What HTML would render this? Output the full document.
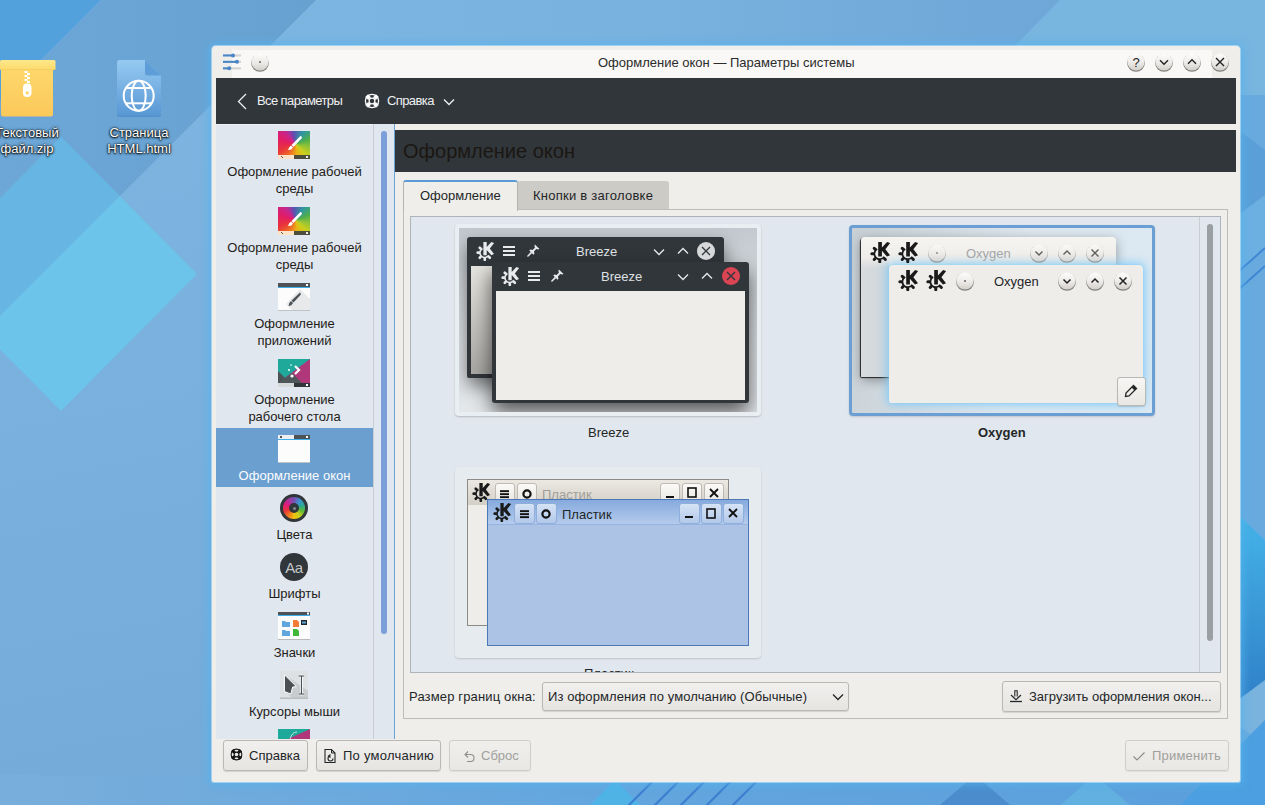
<!DOCTYPE html>
<html><head><meta charset="utf-8">
<style>
*{box-sizing:border-box;margin:0;padding:0}
html,body{width:1265px;height:805px;overflow:hidden}
body{position:relative;font-family:"Liberation Sans",sans-serif;font-size:13px;color:#232627;background:#6aa8da}
.a{position:absolute}
.t{position:absolute;white-space:nowrap;line-height:1}
#bg{position:absolute;left:0;top:0}
.win{position:absolute;left:212px;top:46px;width:1028px;height:736px;background:#efeeeb;border-radius:4px 4px 2px 2px;box-shadow:0 0 0 1px rgba(255,255,255,.4),0 0 8px 3px rgba(85,180,238,.75)}
.hdr{position:absolute;left:216px;top:78px;width:1020px;height:46px;background:#31363b}
.side{position:absolute;left:216px;top:124px;width:179px;height:615px;background:#e0e7ee}
.si{position:absolute;left:0;width:157px;text-align:center;color:#1f1c19;line-height:17px}
.btn{position:absolute;border:1px solid #b9b8b4;border-radius:3px;background:linear-gradient(#f1f0ee,#e5e4e1);box-shadow:0 1px 1px rgba(0,0,0,.12)}
.card{position:absolute;border-radius:4px;background:#eef1f4;box-shadow:0 1px 3px rgba(0,0,0,.18)}
</style></head><body>
<svg width="0" height="0" style="position:absolute">
<defs>
<symbol id="kde" viewBox="0 0 20 21">
<path d="M7.23 7.08 A5.4 5.4 0 1 0 14.35 14.71" fill="none" stroke="currentColor" stroke-width="1.8"/>
<g stroke="currentColor" stroke-width="3.0" stroke-linecap="round"><line x1="3.17" y1="11.85" x2="1.87" y2="11.85"/><line x1="5.10" y1="7.18" x2="4.18" y2="6.26"/><line x1="5.10" y1="16.52" x2="4.18" y2="17.44"/><line x1="9.77" y1="18.45" x2="9.77" y2="19.75"/><line x1="14.44" y1="16.52" x2="15.36" y2="17.44"/></g>
<polygon fill="currentColor" points="8.2,0 11.9,0 11.9,5.4 17.1,0 20.2,1.0 15.4,7.2 20,13.3 17.0,14.6 11.9,8.8 11.9,14.6 8.2,14.6"/>
</symbol>
<symbol id="ham" viewBox="0 0 12 12"><g fill="currentColor"><rect x="0" y="1" width="12" height="2"/><rect x="0" y="5" width="12" height="2"/><rect x="0" y="9" width="12" height="2"/></g></symbol>
<symbol id="pin" viewBox="0 0 14 14"><g fill="currentColor"><path d="M8.5 0.5 L13.5 5.5 L12 6 L10 5.5 L7.5 8 L8 10.5 L7 11.5 L2.5 7 L3.5 6 L6 6.5 L8.5 4 L8 2 Z"/><path d="M4.2 8.4 L5.6 9.8 L1 14 L0 13 Z"/></g></symbol>
<symbol id="chevd" viewBox="0 0 12 8"><path d="M1 1.5 L6 6.5 L11 1.5" fill="none" stroke="currentColor" stroke-width="1.3"/></symbol>
<symbol id="chevu" viewBox="0 0 12 8"><path d="M1 6.5 L6 1.5 L11 6.5" fill="none" stroke="currentColor" stroke-width="1.3"/></symbol>
<linearGradient id="oxb" x1="0" y1="0" x2="0" y2="1"><stop offset="0" stop-color="#fdfdfc"/><stop offset="0.55" stop-color="#eceae7"/><stop offset="1" stop-color="#d2cfca"/></linearGradient>
<filter id="oxs" x="-30%" y="-30%" width="160%" height="160%"><feGaussianBlur stdDeviation="0.6"/></filter>
<symbol id="oxbtn" viewBox="0 0 20 20"><circle cx="10" cy="10.9" r="8.9" fill="#5d5b58" opacity=".75" filter="url(#oxs)"/><circle cx="10" cy="10" r="8.6" fill="url(#oxb)"/></symbol>
<symbol id="lifebuoy" viewBox="0 0 16 16"><g fill="none" stroke="currentColor"><circle cx="8" cy="8" r="6.6" stroke-width="1.3"/><circle cx="8" cy="8" r="2.9" stroke-width="1.3"/></g><g stroke="currentColor" stroke-width="4"><line x1="2.6" y1="2.6" x2="5.6" y2="5.6"/><line x1="13.4" y1="2.6" x2="10.4" y2="5.6"/><line x1="2.6" y1="13.4" x2="5.6" y2="10.4"/><line x1="13.4" y1="13.4" x2="10.4" y2="10.4"/></g></symbol>
</defs></svg>
<svg id="bg" width="1265" height="805" viewBox="0 0 1265 805">
<defs>
<linearGradient id="bgg" x1="0" y1="0" x2="0.3" y2="1"><stop offset="0" stop-color="#7fb5e0"/><stop offset="0.5" stop-color="#7ab0dd"/><stop offset="1" stop-color="#72aad9"/></linearGradient>
<linearGradient id="bandg" x1="0" y1="0" x2="1" y2="0"><stop offset="0" stop-color="#6ca7d7"/><stop offset="1" stop-color="#67a1d1"/></linearGradient>
<clipPath id="dia"><polygon points="61,137 197,274 61,411 -75,274"/></clipPath>
</defs>
<rect width="1265" height="805" fill="url(#bgg)"/>
<linearGradient id="topg" x1="0" y1="0" x2="1" y2="0"><stop offset="0" stop-color="#7db5e1"/><stop offset="0.45" stop-color="#7ab2df"/><stop offset="1" stop-color="#6ea7d8"/></linearGradient>
<polygon points="316,0 1060,0 1015,46 270,46" fill="url(#topg)"/>
<polygon points="1060,0 1265,0 1265,120 1015,46" fill="#78b5df"/>
<polygon points="0,0 101,0 0,101" fill="#52a0dc"/>
<polygon points="101,0 316,0 0,316 0,101" fill="url(#bandg)"/>
<polygon points="61,137 197,274 61,411 -75,274" fill="#6cc4ea"/>
<g clip-path="url(#dia)"><polygon points="101,0 316,0 0,316 0,101" fill="#66b5e2"/></g>
<rect x="1238" y="95" width="27" height="710" fill="#68aade"/>
<polygon points="1238,130 1265,150 1265,230 1238,210" fill="#5a9fd8"/>
<polygon points="1238,215 1265,195 1265,250 1238,270" fill="#6cb0e2"/>
<g stroke="#3f86d4" stroke-width="2"><line x1="1238" y1="272" x2="1265" y2="248"/><line x1="1238" y1="290" x2="1265" y2="266"/></g>
<linearGradient id="rcy" x1="0" y1="0" x2="0" y2="1"><stop offset="0" stop-color="#44b3e8"/><stop offset="1" stop-color="#2f7ec6"/></linearGradient>
<polygon points="1238,515 1265,540 1265,690 1238,710" fill="url(#rcy)"/>
<polygon points="1238,700 1265,680 1265,745 1238,725" fill="#79b3de"/>
<rect x="1238" y="745" width="27" height="60" fill="#55a0dc"/>
<linearGradient id="botg" x1="0" y1="0" x2="1" y2="0"><stop offset="0" stop-color="#78aedb"/><stop offset="0.45" stop-color="#64a6de"/><stop offset="1" stop-color="#5a9fdc"/></linearGradient>
<rect x="0" y="775" width="1265" height="30" fill="url(#botg)"/>
<polygon points="590,805 615,780 640,805" fill="#4fb3e6"/>
<g stroke="#3c7fcf" stroke-width="2.2"><line x1="628" y1="806" x2="655" y2="779"/><line x1="654" y1="806" x2="681" y2="779"/><line x1="680" y1="806" x2="707" y2="779"/><line x1="706" y1="806" x2="733" y2="779"/><line x1="732" y1="806" x2="759" y2="779"/></g>
<polygon points="940,805 975,775 1010,805" fill="#4a8ccc"/>
<polygon points="1060,805 1095,775 1130,805" fill="#62b0e0"/>
<polygon points="1180,805 1265,720 1265,805" fill="#4c9fe0"/>
</svg>

<!-- desktop icons -->
<svg class="a" style="left:0;top:60px" width="56" height="57" viewBox="0 0 56 57">
<defs><linearGradient id="zipb" x1="0" y1="0" x2="0" y2="1"><stop offset="0" stop-color="#fdd76b"/><stop offset="1" stop-color="#fcc85a"/></linearGradient>
<linearGradient id="zipl" x1="0" y1="0" x2="0" y2="1"><stop offset="0" stop-color="#fde88a"/><stop offset="1" stop-color="#fdda6c"/></linearGradient></defs>
<path d="M1 10 H53 V54 Q53 56.5 50.5 56.5 H3.5 Q1 56.5 1 54 Z" fill="url(#zipb)"/>
<rect x="0" y="0" width="55.5" height="10" rx="1.5" fill="url(#zipl)"/>
<rect x="0" y="9" width="55.5" height="1" fill="#f0c455" opacity=".6"/>
<g fill="#fff"><rect x="24.5" y="11" width="3" height="2"/><rect x="27" y="13" width="3" height="2"/><rect x="24.5" y="15" width="3" height="2"/><rect x="27" y="17" width="3" height="2"/><rect x="24.5" y="19" width="3" height="2"/><rect x="27" y="21" width="3" height="2"/></g>
<rect x="23" y="23.5" width="8.5" height="13.5" rx="4" fill="#fff"/><circle cx="27.2" cy="32.8" r="1.6" fill="#fdd060"/>
</svg>
<svg class="a" style="left:116px;top:59px" width="48" height="60" viewBox="0 0 48 60">
<defs><linearGradient id="htmg" x1="0" y1="0" x2="0" y2="1"><stop offset="0" stop-color="#96caf2"/><stop offset="1" stop-color="#5897d4"/></linearGradient></defs>
<path d="M3.5 1 H29 L45 16.5 V54.5 Q45 57.3 42.2 57.3 H3.8 Q1 57.3 1 54.5 V3.5 Q1 1 3.5 1Z" fill="url(#htmg)"/>
<path d="M29 1 L45 16.5 H31.5 Q29 16.5 29 14 Z" fill="#5d9ed8"/>
<path d="M1 56 Q1 57.3 3.8 57.3 H42.2 Q45 57.3 45 56" fill="none" stroke="#3f79b3" stroke-width="1" opacity=".5"/>
<g fill="none" stroke="#fff" stroke-width="2"><circle cx="22.7" cy="36.8" r="15"/><ellipse cx="22.7" cy="36.8" rx="7" ry="15"/><line x1="9.5" y1="29" x2="36" y2="29"/><line x1="9.5" y1="44.3" x2="36" y2="44.3"/></g>
</svg>
<div class="t" style="left:-33px;top:126px;width:120px;text-align:center;color:#fff;text-shadow:0 0 1px #000,0 0 3px #000,0 1px 2px #000">Текстовый</div>
<div class="t" style="left:-33px;top:142px;width:120px;text-align:center;color:#fff;text-shadow:0 0 1px #000,0 0 3px #000,0 1px 2px #000">файл.zip</div>
<div class="t" style="left:79px;top:126px;width:120px;text-align:center;color:#fff;text-shadow:0 0 1px #000,0 0 3px #000,0 1px 2px #000">Страница</div>
<div class="t" style="left:79px;top:142px;width:120px;text-align:center;color:#fff;text-shadow:0 0 1px #000,0 0 3px #000,0 1px 2px #000">HTML.html</div>

<!-- window -->
<div class="win"></div>
<div class="a" style="left:232px;top:50px;width:980px;height:28px;background:#f9f8f6"></div>
<div class="t" style="left:598px;top:56px;color:#2b2b2b">Оформление окон — Параметры системы</div>
<svg class="a" style="left:222px;top:53px" width="20" height="18" viewBox="0 0 20 18">
<g fill="#d2d3d3"><rect x="11" y="1.4" width="8" height="2.1"/><rect x="15" y="7.8" width="4" height="2.1"/><rect x="7" y="14.3" width="12" height="2.1"/></g>
<g fill="#4a86c6"><rect x="1" y="1.4" width="10" height="2.1"/><rect x="1" y="7.8" width="14" height="2.1"/><rect x="1" y="14.3" width="6" height="2.1"/>
<circle cx="11" cy="2.45" r="2"/><circle cx="15" cy="8.85" r="2"/><circle cx="7.2" cy="15.35" r="2"/></g></svg>
<svg class="a" style="left:250px;top:52px" width="20" height="20"><use href="#oxbtn"/><circle cx="10" cy="10" r="0.9" fill="#555"/></svg>
<svg class="a" style="left:1126px;top:52px" width="20" height="20"><use href="#oxbtn"/><text x="10" y="14.6" font-size="13" font-family="Liberation Sans" text-anchor="middle" fill="#222">?</text></svg>
<svg class="a" style="left:1154px;top:52px" width="20" height="20"><use href="#oxbtn"/><path d="M6 8.3 L10 12.3 L14 8.3" fill="none" stroke="#222" stroke-width="1.35"/></svg>
<svg class="a" style="left:1182px;top:52px" width="20" height="20"><use href="#oxbtn"/><path d="M6 11.7 L10 7.7 L14 11.7" fill="none" stroke="#222" stroke-width="1.35"/></svg>
<svg class="a" style="left:1210px;top:52px" width="20" height="20"><use href="#oxbtn"/><path d="M6 6 L14 14 M14 6 L6 14" fill="none" stroke="#222" stroke-width="1.35"/></svg>
<div class="hdr"></div>
<svg class="a" style="left:236px;top:93px" width="12" height="17"><path d="M10 1 L2.5 8.5 L10 16" fill="none" stroke="#eff0f1" stroke-width="1.3"/></svg>
<svg class="a" style="left:364px;top:93px;color:#fcfcfc" width="16" height="16"><use href="#lifebuoy"/></svg>
<svg class="a" style="left:443px;top:98px;color:#eff0f1" width="12" height="8"><use href="#chevd"/></svg>
<div class="t" style="left:257px;top:94px;color:#eff0f1;letter-spacing:-0.6px">Все параметры</div>
<div class="t" style="left:387px;top:94px;color:#eff0f1;letter-spacing:-0.6px">Справка</div>

<div class="side"></div>
<div class="a" style="left:216px;top:124px;width:157px;height:1px;background:#eef2f5"></div>
<div class="a" style="left:216px;top:428px;width:157px;height:59px;background:#6a9fd0"></div>
<!-- sidebar icons -->
<div class="a" style="left:278px;top:131px;width:32px;height:24px;background:conic-gradient(from -10deg at 55% 55%,#5d4fb2,#2f98a0 12%,#4fae4a 22%,#8cc23a 30%,#c9cf1d 40%,#e9b514 50%,#ef6f24 62%,#e8353a 72%,#e41c62 82%,#c6268e 92%,#5d4fb2)"></div>
<svg class="a" style="left:278px;top:131px" width="32" height="28" viewBox="0 0 32 28"><path d="M22.5 5 Q24.5 5.5 23.5 7.5 L15.5 16 L13.5 14 Z" fill="#fff"/><path d="M13 14.5 L15 16.5 Q13.5 19.5 10 19 Q11 15.5 13 14.5Z" fill="#fff"/><rect x="0" y="24" width="16" height="4" fill="#fde3c8"/><rect x="16" y="24" width="16" height="4" fill="#4d4d3d"/><rect x="28" y="25" width="2" height="2" fill="#eee"/><path d="M3 25 L5 27" stroke="#555" stroke-width="1"/></svg>
<div class="a" style="left:278px;top:207px;width:32px;height:24px;background:conic-gradient(from -10deg at 55% 55%,#5d4fb2,#2f98a0 12%,#4fae4a 22%,#8cc23a 30%,#c9cf1d 40%,#e9b514 50%,#ef6f24 62%,#e8353a 72%,#e41c62 82%,#c6268e 92%,#5d4fb2)"></div>
<svg class="a" style="left:278px;top:207px" width="32" height="28" viewBox="0 0 32 28"><path d="M22.5 5 Q24.5 5.5 23.5 7.5 L15.5 16 L13.5 14 Z" fill="#fff"/><path d="M13 14.5 L15 16.5 Q13.5 19.5 10 19 Q11 15.5 13 14.5Z" fill="#fff"/><rect x="0" y="24" width="16" height="4" fill="#fde3c8"/><rect x="16" y="24" width="16" height="4" fill="#4d4d3d"/><rect x="28" y="25" width="2" height="2" fill="#eee"/><path d="M3 25 L5 27" stroke="#555" stroke-width="1"/></svg>
<svg class="a" style="left:278px;top:283px" width="32" height="28" viewBox="0 0 32 28">
<rect x="0" y="0" width="32" height="27" fill="#fcfcfc"/><rect x="0" y="27" width="32" height="1" fill="#c0c3c5"/>
<polygon points="22,6 32,16 32,27 14,27 8,21" fill="#e8e9ea"/>
<rect x="0" y="0" width="32" height="4" fill="#4d5257"/><rect x="0" y="4" width="32" height="1" fill="#3daee9"/><rect x="28" y="1" width="2" height="2" fill="#fff"/>
<path d="M22 9.5 Q23.5 10.5 22.5 12 L15.5 19.5 L13.5 17.5 Z" fill="#4d5257"/><path d="M13 18 L15 20 Q13.5 23 10.5 23 Q11 19.5 13 18Z" fill="#4d5257"/></svg>
<svg class="a" style="left:278px;top:359px" width="32" height="28" viewBox="0 0 32 28">
<rect x="0" y="0" width="32" height="24" fill="#2a8bc4"/>
<polygon points="0,0 32,0 0,24" fill="#1ea99a"/>
<polygon points="32,0 32,24 0,24" fill="#b0387a"/>
<polygon points="0,12 12,24 0,24" fill="#4a5356"/><polygon points="0,24 12,24 24,24 14,14" fill="#4f575a"/>
<rect x="0" y="24" width="16" height="4" fill="#d6d9da"/><rect x="16" y="24" width="16" height="4" fill="#31363b"/><rect x="28" y="25" width="2" height="2" fill="#fff"/>
<path d="M17 7 L21 11 L17 15" fill="none" stroke="#fff" stroke-width="2.2"/><circle cx="14" cy="17" r="1.6" fill="#fff"/><circle cx="11" cy="11" r="1" fill="#fff"/><circle cx="13" cy="6" r=".8" fill="#fff"/></svg>
<svg class="a" style="left:278px;top:435px" width="32" height="28" viewBox="0 0 32 28">
<rect x="0" y="0" width="32" height="28" fill="#fcfcfc"/><rect x="0" y="27" width="32" height="1" fill="#c0c3c5"/>
<rect x="0" y="0" width="16" height="4" fill="#eceeef"/><rect x="16" y="0" width="16" height="4" fill="#4d5257"/><rect x="0" y="4" width="32" height="1" fill="#3daee9"/>
<rect x="2" y="1" width="2" height="2" fill="#4d5257"/><rect x="28" y="1" width="2" height="2" fill="#fff"/></svg>
<div class="a" style="left:280px;top:494px;width:28px;height:28px;border-radius:50%;background:#31363b"></div>
<div class="a" style="left:283px;top:497px;width:22px;height:22px;border-radius:50%;background:conic-gradient(#7a4fb0,#3f8fd0 10%,#2aa89a 20%,#5cb83a 30%,#c5d11c 40%,#f2c10f 50%,#f07a22 60%,#e8353a 70%,#e2187e 82%,#a33aa0 92%,#7a4fb0)"></div>
<div class="a" style="left:289px;top:503px;width:10px;height:10px;border-radius:50%;background:#31363b"></div>
<div class="a" style="left:292.5px;top:506.5px;width:3px;height:3px;border-radius:50%;background:#808b8c"></div>
<svg class="a" style="left:280px;top:553px" width="28" height="28" viewBox="0 0 28 28"><circle cx="14" cy="14" r="14" fill="#31363b"/><text x="14" y="19.5" font-size="15" font-family="Liberation Sans" text-anchor="middle" fill="#c4c7c9" letter-spacing="-0.5">Aa</text></svg>
<svg class="a" style="left:278px;top:612px" width="32" height="28" viewBox="0 0 32 28">
<rect x="0" y="0" width="32" height="28" fill="#fcfcfc"/><rect x="0" y="27" width="32" height="1" fill="#b8bbbe"/>
<rect x="0" y="0" width="32" height="3" fill="#4d5257"/><rect x="0" y="3" width="32" height="1" fill="#3daee9"/><rect x="29" y="0.5" width="2" height="2" fill="#fff"/>
<path d="M4 9 h3 l1 1 h4 v5 h-8z" fill="#5ea6dd"/><path d="M4 18 h3 l1 1 h4 v5 h-8z" fill="#5ea6dd"/>
<path d="M15 8 h4 l2 2 v5 h-6z" fill="#f47b35"/><path d="M15 17 h4 l2 2 v5 h-6z" fill="#3fb83a"/>
<rect x="23" y="8" width="6" height="5" fill="#232627"/><rect x="24" y="9.5" width="4" height="2" fill="#5ea6dd"/></svg>
<svg class="a" style="left:280px;top:671px" width="28" height="28" viewBox="0 0 28 28">
<rect x="0" y="0" width="28" height="27.5" rx="1.5" fill="#dee1e3"/><polygon points="5,4 28,20 28,27 12,27 5,20" fill="#c9ccce"/><rect x="0" y="26.5" width="28" height="1.5" fill="#babdbf"/>
<path d="M4.4 3.7 L16.4 15.6 L12.6 16.1 L10.8 23 L4.4 20.5 Z" fill="#4b4f52" stroke="#fff" stroke-width="1" stroke-linejoin="round"/>
<path d="M18.6 5 h5.6 M18.6 23 h5.6 M21.4 5 v18" stroke="#fff" stroke-width="2.6" fill="none"/><path d="M18.6 5 h5.6 M18.6 23 h5.6 M21.4 5 v18" stroke="#3a3d40" stroke-width="1" fill="none"/></svg>
<svg class="a" style="left:278px;top:729px" width="32" height="10" viewBox="0 0 32 10"><rect width="32" height="10" fill="#1ea99a"/><polygon points="32,0 32,10 10,10" fill="#b0387a"/><path d="M12 10 Q14 3 19 3" stroke="#fff" stroke-width="1" fill="none" opacity=".7"/></svg>
<!-- sidebar labels -->
<div class="si" style="left:216px;top:163px">Оформление рабочей<br>среды</div>
<div class="si" style="left:216px;top:239px">Оформление рабочей<br>среды</div>
<div class="si" style="left:216px;top:315px">Оформление<br>приложений</div>
<div class="si" style="left:216px;top:391px">Оформление<br>рабочего стола</div>
<div class="si" style="left:216px;top:467px;color:#fcfcfc">Оформление окон</div>
<div class="si" style="left:216px;top:526px">Цвета</div>
<div class="si" style="left:216px;top:585px">Шрифты</div>
<div class="si" style="left:216px;top:644px">Значки</div>
<div class="si" style="left:216px;top:703px">Курсоры мыши</div>
<div class="a" style="left:373px;top:124px;width:1px;height:615px;background:#c8ced4"></div>
<div class="a" style="left:381px;top:131px;width:6px;height:503px;background:#7b9fd8;border-radius:3px"></div>
<div class="a" style="left:394px;top:124px;width:1px;height:615px;background:#6aa2d8"></div>

<div class="a" style="left:395px;top:124px;width:841px;height:615px;background:#efeeea"></div>
<div class="a" style="left:395px;top:130px;width:841px;height:42px;background:#31363b"></div>
<div class="t" style="left:403px;top:141px;font-size:20px;color:#1b1712">Оформление окон</div>

<!-- tabs -->
<div class="a" style="left:517px;top:181px;width:152px;height:29px;background:#cdcbc6;border-radius:3px 3px 0 0"></div>
<div class="a" style="left:403px;top:180px;width:115px;height:31px;background:#efeeea;border:1px solid #b5b4b0;border-bottom:none;border-top:2px solid #5b9bd5;border-radius:3px 3px 0 0"></div>
<div class="t" style="left:420px;top:189px">Оформление</div>
<div class="t" style="left:533px;top:189px;letter-spacing:.25px">Кнопки в заголовке</div>
<div class="a" style="left:403px;top:210px;width:825px;height:509px;border:1px solid #bdbcb8;border-top:none"></div>
<div class="a" style="left:517px;top:209px;width:711px;height:1px;background:#bdbcb8"></div>

<!-- list -->
<div class="a" style="left:410px;top:216px;width:811px;height:457px;background:#e0e7ee;border:1px solid #aeb4ba"></div>
<div class="a" style="left:1199px;top:217px;width:1px;height:455px;background:#c8ced4"></div>
<div class="a" style="left:1207px;top:224px;width:6px;height:417px;background:#9a9fa3;border-radius:3px"></div>

<div class="a" style="left:411px;top:217px;width:809px;height:455px;overflow:hidden">
<div class="a" style="left:-411px;top:-217px;width:1265px;height:805px">
<!-- Breeze card -->
<div class="a" style="left:455px;top:224px;width:306px;height:192px;border-radius:4px;background:#e9eef2;box-shadow:0 1px 2px rgba(0,0,0,.2)"></div>
<div class="a" style="left:459px;top:228px;width:298px;height:184px;background:linear-gradient(#c3c9ce,#dfe3e6 60%,#e4e7ea);overflow:hidden">
 <div class="a" style="left:8px;top:9px;width:257px;height:141px;background:#31363b;border-radius:3px 3px 2px 2px;box-shadow:0 8px 18px rgba(0,0,0,.5)"></div>
 <div class="a" style="left:12px;top:38px;width:22px;height:108px;background:linear-gradient(160deg,#e4e2dd 5%,#c2c0bc 55%,#a4a3a0)"></div>
 <div class="a" style="left:33px;top:34px;width:257px;height:141px;background:#31363b;border-radius:3px 3px 3px 3px;box-shadow:0 10px 20px rgba(0,0,0,.62)"></div>
 <div class="a" style="left:37px;top:63px;width:249px;height:109px;background:#efede9"></div>
</div>
<svg class="a" style="left:476px;top:242px;color:#e8eaeb" width="18" height="19"><use href="#kde"/></svg>
<svg class="a" style="left:503px;top:245px;color:#e8eaeb" width="12" height="12"><use href="#ham"/></svg>
<svg class="a" style="left:527px;top:244px;color:#e8eaeb" width="13" height="13"><use href="#pin"/></svg>
<div class="t" style="left:576px;top:245px;color:#dfe1e3">Breeze</div>
<svg class="a" style="left:653px;top:248px;color:#e8eaeb" width="12" height="8"><use href="#chevd"/></svg>
<svg class="a" style="left:677px;top:247px;color:#e8eaeb" width="12" height="8"><use href="#chevu"/></svg>
<svg class="a" style="left:697px;top:242px" width="18" height="18"><circle cx="9" cy="9" r="9" fill="#d6d8da"/><path d="M5 5 L13 13 M13 5 L5 13" stroke="#31363b" stroke-width="1.3"/></svg>
<svg class="a" style="left:501px;top:267px;color:#e8eaeb" width="18" height="19"><use href="#kde"/></svg>
<svg class="a" style="left:528px;top:270px;color:#e8eaeb" width="12" height="12"><use href="#ham"/></svg>
<svg class="a" style="left:551px;top:269px;color:#e8eaeb" width="13" height="13"><use href="#pin"/></svg>
<div class="t" style="left:601px;top:270px;color:#dfe1e3">Breeze</div>
<svg class="a" style="left:677px;top:273px;color:#e8eaeb" width="12" height="8"><use href="#chevd"/></svg>
<svg class="a" style="left:701px;top:272px;color:#e8eaeb" width="12" height="8"><use href="#chevu"/></svg>
<svg class="a" style="left:722px;top:267px" width="18" height="18"><circle cx="9" cy="9" r="9" fill="#da4453"/><path d="M5 5 L13 13 M13 5 L5 13" stroke="#31363b" stroke-width="1.3"/></svg>
<div class="t" style="left:588px;top:426px">Breeze</div>

<!-- Oxygen card -->
<div class="a" style="left:849px;top:225px;width:306px;height:191px;border-radius:4px;border:3px solid #6b9fd3;background:linear-gradient(100deg,#c8d0d6,#dfe8ef 55%,#dbe9f3);box-shadow:0 1px 2px rgba(0,0,0,.15);overflow:hidden">
 <div class="a" style="left:9px;top:9px;width:255px;height:140px;background:linear-gradient(#f5f4f1,#eeece8 25px,#e8e7e4);border-radius:4px 4px 2px 2px;box-shadow:-1px 1px 1px #222,0 3px 12px rgba(0,0,0,.35)"></div>
 <div class="a" style="left:9px;top:30px;width:28px;height:119px;background:linear-gradient(90deg,#d9dcde,#cdd6dc);-webkit-mask-image:linear-gradient(transparent,#000 10px)"></div>
 <div class="a" style="left:37px;top:37px;width:254px;height:138px;background:#efedea;border-radius:4px 4px 2px 2px;box-shadow:0 0 2px #86d0f8,0 0 10px 2px rgba(120,200,248,.85)"></div>
</div>
<svg class="a" style="left:870px;top:242px;color:#1a1a1a" width="20" height="21"><use href="#kde"/></svg>
<svg class="a" style="left:898px;top:242px;color:#1a1a1a" width="20" height="21"><use href="#kde"/></svg>
<svg class="a" style="left:927px;top:243px;opacity:.7" width="20" height="20"><use href="#oxbtn"/><circle cx="10" cy="10" r=".9" fill="#555"/></svg>
<div class="t" style="left:966px;top:247px;color:#a4a6a8">Oxygen</div>
<svg class="a" style="left:1029px;top:243px;opacity:.7" width="20" height="20"><use href="#oxbtn"/><path d="M6.5 8.5 L10 12 L13.5 8.5" fill="none" stroke="#222" stroke-width="1.4"/></svg>
<svg class="a" style="left:1057px;top:243px;opacity:.7" width="20" height="20"><use href="#oxbtn"/><path d="M6.5 11.5 L10 8 L13.5 11.5" fill="none" stroke="#222" stroke-width="1.4"/></svg>
<svg class="a" style="left:1085px;top:243px;opacity:.7" width="20" height="20"><use href="#oxbtn"/><path d="M6.5 6.5 L13.5 13.5 M13.5 6.5 L6.5 13.5" fill="none" stroke="#222" stroke-width="1.4"/></svg>
<svg class="a" style="left:898px;top:270px;color:#1a1a1a" width="20" height="21"><use href="#kde"/></svg>
<svg class="a" style="left:926px;top:270px;color:#1a1a1a" width="20" height="21"><use href="#kde"/></svg>
<svg class="a" style="left:955px;top:271px" width="20" height="20"><use href="#oxbtn"/><circle cx="10" cy="10" r=".9" fill="#555"/></svg>
<div class="t" style="left:994px;top:275px;color:#232627">Oxygen</div>
<svg class="a" style="left:1057px;top:271px" width="20" height="20"><use href="#oxbtn"/><path d="M6.5 8.5 L10 12 L13.5 8.5" fill="none" stroke="#222" stroke-width="1.5"/></svg>
<svg class="a" style="left:1085px;top:271px" width="20" height="20"><use href="#oxbtn"/><path d="M6.5 11.5 L10 8 L13.5 11.5" fill="none" stroke="#222" stroke-width="1.5"/></svg>
<svg class="a" style="left:1113px;top:271px" width="20" height="20"><use href="#oxbtn"/><path d="M6.5 6.5 L13.5 13.5 M13.5 6.5 L6.5 13.5" fill="none" stroke="#222" stroke-width="1.5"/></svg>
<div class="btn" style="left:1117px;top:377px;width:29px;height:29px;background:linear-gradient(#f7f6f4,#e9e7e4)"></div>
<svg class="a" style="left:1124px;top:384px" width="14" height="14" viewBox="0 0 14 14"><path d="M9.5 1.5 L12.5 4.5 L5 12 L1.5 12.5 L2 9 Z" fill="none" stroke="#232627" stroke-width="1.3"/><path d="M8 3 L11 6" stroke="#232627" stroke-width="1.3"/><path d="M9.5 1.5 L12.5 4.5 L11 6 L8 3Z" fill="#232627"/></svg>
<div class="t" style="left:978px;top:426px;font-weight:bold">Oxygen</div>

<!-- Plastik card -->
<div class="a" style="left:455px;top:467px;width:306px;height:191px;border-radius:4px;background:#e6ebef;box-shadow:0 1px 2px rgba(0,0,0,.15)"></div>
<div class="a" style="left:467px;top:479px;width:262px;height:147px;background:#efede9;border:1px solid #8c8b86"></div>
<div class="a" style="left:468px;top:480px;width:260px;height:25px;background:linear-gradient(#ece9e3,#d3cfc6)"></div>
<svg class="a" style="left:472px;top:483px;color:#1a1a1a" width="18" height="19"><use href="#kde"/></svg>
<div class="a" style="left:495px;top:483px;width:20px;height:20px;border:1px solid #bdbab3;border-radius:3px;background:linear-gradient(#fbfaf8,#e9e6e0)"></div>
<div class="a" style="left:517px;top:483px;width:20px;height:20px;border:1px solid #bdbab3;border-radius:3px;background:linear-gradient(#fbfaf8,#e9e6e0)"></div>
<svg class="a" style="left:499px;top:488px" width="12" height="12"><rect x="1" y="2.2" width="9" height="1.9" fill="#111"/><rect x="1" y="5.2" width="9" height="1.9" fill="#111"/><rect x="1" y="8.2" width="9" height="1.9" fill="#111"/></svg>
<svg class="a" style="left:521px;top:488px" width="12" height="12"><circle cx="6" cy="6" r="3.6" fill="none" stroke="#111" stroke-width="2.2"/></svg>
<div class="t" style="left:542px;top:488px;color:#a09e9a">Пластик</div>
<div class="a" style="left:660px;top:483px;width:20px;height:22px;border:1px solid #bdbab3;border-radius:3px;background:linear-gradient(#fbfaf8,#e9e6e0)"></div>
<div class="a" style="left:682px;top:483px;width:20px;height:22px;border:1px solid #bdbab3;border-radius:3px;background:linear-gradient(#fbfaf8,#e9e6e0)"></div>
<div class="a" style="left:704px;top:483px;width:20px;height:22px;border:1px solid #bdbab3;border-radius:3px;background:linear-gradient(#fbfaf8,#e9e6e0)"></div>
<svg class="a" style="left:660px;top:483px" width="64" height="22"><rect x="6" y="13" width="8" height="2" fill="#111"/><rect x="28" y="5" width="8" height="9" fill="none" stroke="#111" stroke-width="1.6"/><path d="M50 6 L58 14 M58 6 L50 14" stroke="#111" stroke-width="1.8"/></svg>

<div class="a" style="left:487px;top:499px;width:262px;height:147px;background:#adc3e5;border:1px solid #4d78b8"></div>
<div class="a" style="left:488px;top:500px;width:260px;height:25px;background:linear-gradient(#86aade,#b4cbec);border-bottom:1px solid #96b4e0"></div>
<svg class="a" style="left:493px;top:503px;color:#1a1a1a" width="18" height="19"><use href="#kde"/></svg>
<div class="a" style="left:514px;top:503px;width:21px;height:21px;border:1px solid #8eaedc;border-radius:3px;background:linear-gradient(#d6e3f5,#b3c9ea)"></div>
<div class="a" style="left:536px;top:503px;width:21px;height:21px;border:1px solid #8eaedc;border-radius:3px;background:linear-gradient(#d6e3f5,#b3c9ea)"></div>
<svg class="a" style="left:519px;top:508px" width="12" height="12"><rect x="1" y="2.2" width="9" height="1.9" fill="#111"/><rect x="1" y="5.2" width="9" height="1.9" fill="#111"/><rect x="1" y="8.2" width="9" height="1.9" fill="#111"/></svg>
<svg class="a" style="left:540px;top:508px" width="12" height="12"><circle cx="6" cy="6" r="3.6" fill="none" stroke="#111" stroke-width="2.2"/></svg>
<div class="t" style="left:562px;top:508px;color:#232627">Пластик</div>
<div class="a" style="left:679px;top:503px;width:21px;height:21px;border:1px solid #8eaedc;border-radius:3px;background:linear-gradient(#d6e3f5,#b3c9ea)"></div>
<div class="a" style="left:701px;top:503px;width:21px;height:21px;border:1px solid #8eaedc;border-radius:3px;background:linear-gradient(#d6e3f5,#b3c9ea)"></div>
<div class="a" style="left:723px;top:503px;width:21px;height:21px;border:1px solid #8eaedc;border-radius:3px;background:linear-gradient(#d6e3f5,#b3c9ea)"></div>
<svg class="a" style="left:679px;top:503px" width="64" height="22"><rect x="6" y="13" width="8" height="2" fill="#111"/><rect x="28" y="6" width="8" height="9" fill="none" stroke="#111" stroke-width="1.6"/><path d="M50 6 L58 14 M58 6 L50 14" stroke="#111" stroke-width="1.8"/></svg>
<div class="t" style="left:584px;top:667px">Пластик</div>
</div></div>
<!-- bottom row -->
<div class="t" style="left:409px;top:690px;letter-spacing:.15px">Размер границ окна:</div>
<div class="btn" style="left:542px;top:682px;width:307px;height:29px"></div>
<div class="t" style="left:548px;top:690px;letter-spacing:.1px">Из оформления по умолчанию (Обычные)</div>
<svg class="a" style="left:832px;top:693px;color:#232627" width="12" height="8"><use href="#chevd"/></svg>
<div class="btn" style="left:1002px;top:681px;width:219px;height:31px"></div>
<div class="t" style="left:1029px;top:690px">Загрузить оформления окон...</div>
<svg class="a" style="left:1008px;top:688px" width="16" height="16" viewBox="0 0 16 16"><path d="M6.8 8.5 V2.8 H9.2 V8.5" fill="none" stroke="#232627" stroke-width="1.1"/><path d="M3 7 L8 11.6 L13 7" fill="none" stroke="#232627" stroke-width="1.2"/><path d="M2 13.5 H14" stroke="#232627" stroke-width="1.3"/></svg>

<!-- footer -->
<div class="btn" style="left:223px;top:740px;width:85px;height:31px"></div>
<div class="t" style="left:249px;top:749px">Справка</div>
<svg class="a" style="left:230px;top:748px;color:#111" width="13" height="13"><use href="#lifebuoy"/></svg>
<div class="btn" style="left:316px;top:740px;width:125px;height:31px"></div>
<div class="t" style="left:343px;top:749px;letter-spacing:.25px">По умолчанию</div>
<svg class="a" style="left:322px;top:748px" width="16" height="16" viewBox="0 0 16 16"><path d="M3 1.5 H9.5 L13 5 V14.5 H3 Z" fill="none" stroke="#232627" stroke-width="1.1"/><path d="M9.5 1.5 V5 H13" fill="none" stroke="#232627" stroke-width="1"/><path d="M11 10.5 A2.5 2.5 0 1 1 8.5 8 H7" fill="none" stroke="#232627" stroke-width="1.1"/><path d="M8.5 6.5 L6.5 8 L8.5 9.5" fill="none" stroke="#232627" stroke-width="1.1"/></svg>
<div class="btn" style="left:449px;top:740px;width:82px;height:31px;opacity:.6"></div>
<div class="t" style="left:481px;top:749px;color:#a0a09c">Сброс</div>
<svg class="a" style="left:461px;top:748px" width="16" height="16" viewBox="0 0 16 16"><path d="M5 6.5 H9.5 A3.5 3.5 0 0 1 9.5 13.5 H6" fill="none" stroke="#8e8e8b" stroke-width="1.1"/><path d="M7 3.5 L4 6.5 L7 9.5" fill="none" stroke="#8e8e8b" stroke-width="1.1"/></svg>
<div class="btn" style="left:1125px;top:740px;width:104px;height:31px;opacity:.6"></div>
<div class="t" style="left:1152px;top:749px;color:#a0a09c;letter-spacing:.2px">Применить</div>
<svg class="a" style="left:1131px;top:748px" width="16" height="16" viewBox="0 0 16 16"><path d="M2.5 8.5 L6 12 L13.5 4.5" fill="none" stroke="#8e8e8b" stroke-width="1.2"/></svg>

</body></html>
